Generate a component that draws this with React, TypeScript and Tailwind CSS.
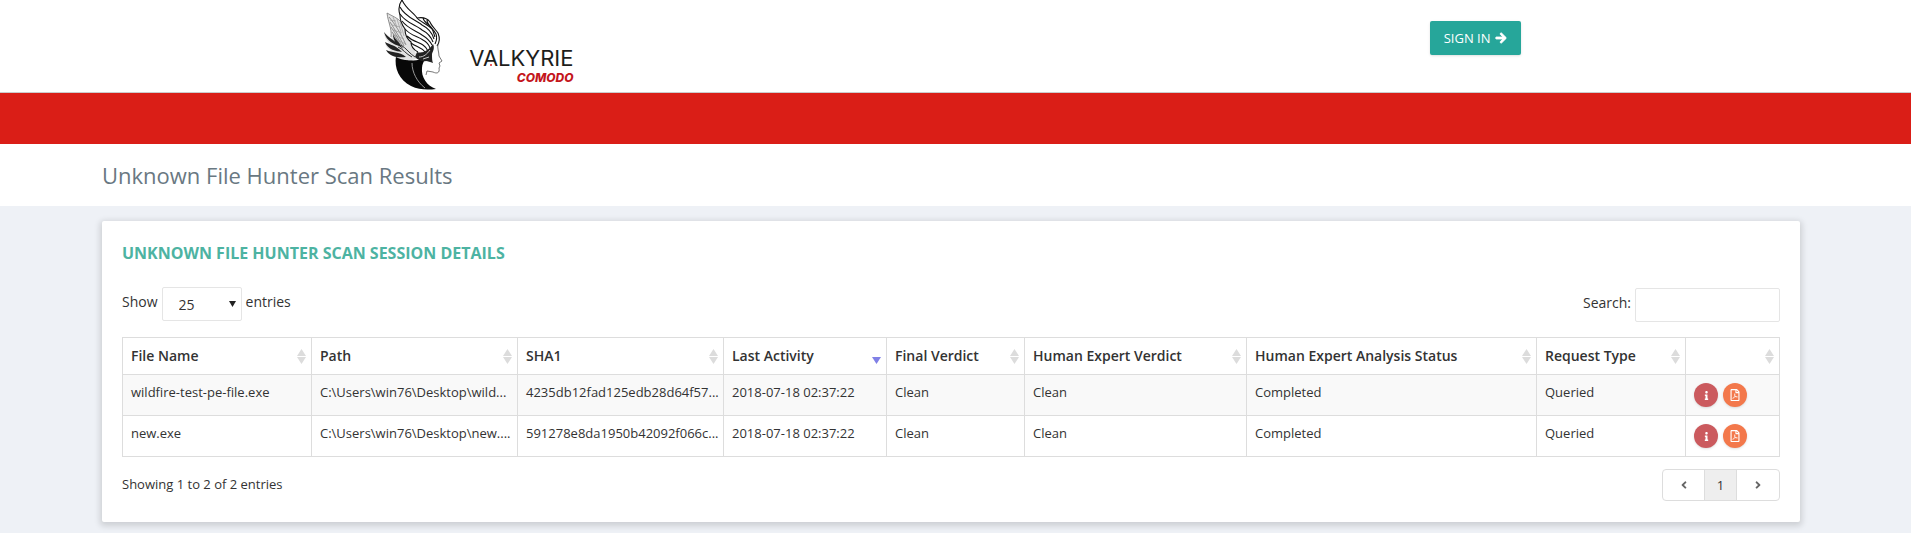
import React, { useState } from 'react';
import { FaArrowRight, FaAngleLeft, FaAngleRight, FaInfo, FaRegFilePdf } from 'react-icons/fa';

interface ScanRow {
  fileName: string;
  path: string;
  sha1: string;
  lastActivity: string;
  finalVerdict: string;
  expertVerdict: string;
  analysisStatus: string;
  requestType: string;
}

const columns = [
  { title: 'File Name', width: 'w-[189px]' },
  { title: 'Path', width: 'w-[206px]' },
  { title: 'SHA1', width: 'w-[206px]' },
  { title: 'Last Activity', width: 'w-[163px]', sorted: true },
  { title: 'Final Verdict', width: 'w-[138px]' },
  { title: 'Human Expert Verdict', width: 'w-[222px]' },
  { title: 'Human Expert Analysis Status', width: 'w-[290px]' },
  { title: 'Request Type', width: 'w-[149px]' },
  { title: '', width: 'w-[94px]' },
];

const rows: ScanRow[] = [
  {
    fileName: 'wildfire-test-pe-file.exe',
    path: 'C:\\Users\\win76\\Desktop\\wild...',
    sha1: '4235db12fad125edb28d64f57...',
    lastActivity: '2018-07-18 02:37:22',
    finalVerdict: 'Clean',
    expertVerdict: 'Clean',
    analysisStatus: 'Completed',
    requestType: 'Queried',
  },
  {
    fileName: 'new.exe',
    path: 'C:\\Users\\win76\\Desktop\\new....',
    sha1: '591278e8da1950b42092f066c...',
    lastActivity: '2018-07-18 02:37:22',
    finalVerdict: 'Clean',
    expertVerdict: 'Clean',
    analysisStatus: 'Completed',
    requestType: 'Queried',
  },
];

const Helmet = () => (
  <svg width="60" height="90" viewBox="0 0 60 90" fill="none" aria-hidden="true">
    {/* hair */}
    <path d="M12 56 C10 68 15 80 27 86 C35 90 44 90 52 89 C43 86 37 77 38 68 C38 64 40 62 41 58 C32 62 22 61 12 56 Z" fill="#080808" />
    <path d="M28 63 C28 72 33 82 41 88" stroke="#bbb" strokeWidth="0.8" />
    {/* back wing */}
    <path d="M3 13 C8 16 14 18 17 22 L34 58 C27 62 17 60 12 57 C8 56 4 54 2 50 L7 51 C4 48 1 46 1 42 L6 44 C3 41 0 37 0 32 L7 38 C8 33 6 28 5 24 C4 20 3 17 3 13 Z" fill="#e2e2e2" />
    <path d="M3 13 C8 16 14 18 17 22 M3 13 C4 22 8 28 7 37 M5 17 C11 24 16 32 22 45 M6 22 C11 30 15 36 20 46 M7 27 C12 34 15 40 19 48 M8 32 C12 37 15 43 19 50" stroke="#777" strokeWidth="0.8" />
    <path d="M9 17 L13 27 M13 19 L17 32 M16 22 L20 36 M6 20 L12 21 M8 25 L16 27 M9 30 L18 33 M10 35 L20 39 M11 39 L22 44" stroke="#999" strokeWidth="0.7" />
    <path d="M0 32 C4 38 10 39 15 46 C10 44 3 42 0 32 Z M1 42 C6 45 12 45 18 52 C12 51 4 50 1 42 Z M2 50 C8 53 15 51 22 57 C14 58 6 57 2 50 Z M9 34 C11 40 16 42 18 48 C13 45 9 41 9 34 Z" fill="#222" />
    <path d="M14 47 C19 49 22 54 28 57 M17 45 C22 48 26 54 31 57" stroke="#333" strokeWidth="1" />
    {/* front wing */}
    <path d="M18 0 C15 4 14 9 16 15 C16 20 18 25 21 29 C21 34 23 39 27 42 C27 46 30 50 34 52 C35 56 40 58 44 57 C48 55 50 51 52 48 C54 46 56 42 55 38 C54 33 51 29 48 25 C45 20 40 20 35 18 C30 14 22 9 18 0 Z" fill="#fff" />
    <path d="M18 0 C15 4 14 9 16 15 C16 20 18 25 21 29 C21 34 23 39 27 42 C27 46 30 50 34 52" stroke="#111" strokeWidth="1.1" />
    <path d="M18 0 C22 9 30 13 33 18 C36 22 44 24 48 29 C50 32 50 35 51 37 M16 7 C21 17 32 20 38 25 C44 28 48 32 50 39 M16 14 C22 23 32 25 38 30 C44 33 47 37 49 42 M18 21 C24 29 33 31 38 35 C43 38 46 41 48 45 M21 29 C27 36 34 36 39 40 C43 42 45 45 46 48 M23 36 C29 42 35 42 39 45 C42 47 43 49 44 51 M27 43 C32 47 37 47 41 52" stroke="#111" strokeWidth="1.1" />
    <path d="M33 18 C38 17 43 18 46 22 C47 25 51 29 54 33 C56 38 56 42 53 46 M43 20 C43 25 49 28 52 34 C53 37 53 40 51 44 M39 18 C40 22 44 24 47 27" stroke="#111" strokeWidth="1.1" />
    {/* temple */}
    <path d="M33 52 C39 54 45 50 49 44 C51 48 49 51 48 54 C48 58 48 61 49 63 C46 62 44 61 42 61 C38 62 34 60 31 57 Z" fill="#222" />
    <path d="M35 57 C40 57 43 54 46 50 M39 59 L45 57" stroke="#eee" strokeWidth="0.8" />
    {/* profile */}
    <path d="M54 44 C53 48 55 52 55 56 L58 61 L55 63 L56 66 L55 68 C56 73 53 74 49 72 L43 71 L42 75" stroke="#555" strokeWidth="0.8" />
  </svg>
);

const SortIcon = ({ sorted }: { sorted?: boolean }) => (
  <svg width="9" height="15" viewBox="0 0 9 15" className="shrink-0" aria-hidden="true">
    {!sorted && <path d="M4.5 0 L9 7 H0 Z" fill="#dcdcdc" />}
    <path d="M0 8 H9 L4.5 15 Z" fill={sorted ? '#8080e6' : '#dcdcdc'} />
  </svg>
);

const App: React.FC = () => {
  const [pageSize, setPageSize] = useState('25');
  const [search, setSearch] = useState('');

  const visible = rows.filter((r) => r.fileName.includes(search) || r.sha1.includes(search));

  return (
    <div className="min-h-screen bg-[#eef1f6] text-sm text-[#333] font-['Open_Sans',sans-serif]">
      {/* Header */}
      <header className="bg-white border-b border-[#ccc]">
        <div className="max-w-[1144px] h-[92px] mx-auto flex items-start justify-between">
          <a href="#" className="w-[190px] flex items-start justify-between">
            <Helmet />
            <span className="pt-[46px] flex flex-col items-end font-['Inter',sans-serif]">
              <span className="relative text-[22px] leading-6 text-[#1d1d1b]">
                VALKYRIE
                <span className="absolute left-[21px] bottom-1 size-[2px] rounded-full bg-[#d8232a]" />
              </span>
              <span className="mt-[2px] text-xs leading-3 font-extrabold italic text-[#c4161c]">COMODO</span>
            </span>
          </a>
          <button className="mt-[21px] mr-[7px] h-[34px] px-[14px] flex items-center gap-1 rounded-xs bg-[#26a69a] text-white text-[13px] shadow">
            SIGN IN <FaArrowRight size={12} stroke="currentColor" strokeWidth={40} />
          </button>
        </div>
      </header>
      <div className="h-[51px] bg-[#da1e17]" />

      {/* Page title */}
      <div className="bg-white pl-[102px] py-4">
        <h1 className="text-[22px] leading-[30px] text-[#697882]">Unknown File Hunter Scan Results</h1>
      </div>

      <main className="pl-[102px] pr-[111px] pt-[15px] pb-[11px]">
        <section className="bg-white rounded-xs shadow-[0_2px_6px_2px_rgba(0,0,0,0.14)] px-5 pt-5 pb-[21px]">
          <h2 className="text-base leading-6 font-bold text-[#4db3a2]">UNKNOWN FILE HUNTER SCAN SESSION DETAILS</h2>

          <div className="mt-[22px] flex justify-between leading-[30px]">
            <label className="flex items-start gap-1">
              Show
              <span className="relative">
                <select
                  value={pageSize}
                  onChange={(e) => setPageSize(e.target.value)}
                  className="block w-20 h-[34px] pl-4 pt-[2px] appearance-none bg-white border border-[#e5e5e5] rounded-xs"
                >
                  <option>10</option>
                  <option>25</option>
                  <option>50</option>
                </select>
                <svg width="7" height="6" viewBox="0 0 7 6" className="absolute right-[6px] top-[14px] pointer-events-none">
                  <path d="M0 0 H7 L3.5 6 Z" fill="#222" />
                </svg>
              </span>
              entries
            </label>
            <label className="pt-px flex items-start gap-1">
              Search:
              <input
                type="search"
                value={search}
                onChange={(e) => setSearch(e.target.value)}
                className="w-[145px] h-[34px] px-3 border border-[#e5e5e5] rounded-xs"
              />
            </label>
          </div>

          <table className="mt-[15px] w-full table-fixed border-collapse">
            <thead>
              <tr>
                {columns.map((col, i) => (
                  <th key={i} className={`${col.width} h-[37px] pl-2 pr-[5px] border border-[#ddd] text-left font-semibold`}>
                    <div className="flex items-center justify-between">
                      <span className="whitespace-nowrap">{col.title}</span>
                      <SortIcon sorted={col.sorted} />
                    </div>
                  </th>
                ))}
              </tr>
            </thead>
            <tbody className="text-[13px] leading-[18px]">
              {visible.map((row) => (
                <tr key={row.sha1} className="odd:bg-[#f9f9f9]">
                  {Object.values(row).map((value, i) => (
                    <td key={i} className="px-2 pt-2 border border-[#ddd] align-top whitespace-nowrap">{value}</td>
                  ))}
                  <td className="p-2 border border-[#ddd]">
                    <div className="flex gap-[5px] text-white">
                      <button aria-label="Details" className="w-6 h-6 rounded-full bg-[#cb5a5e] flex items-center justify-center shadow">
                        <FaInfo size={9} />
                      </button>
                      <button aria-label="PDF report" className="w-6 h-6 rounded-full bg-[#f3784b] flex items-center justify-center shadow">
                        <FaRegFilePdf size={12} />
                      </button>
                    </div>
                  </td>
                </tr>
              ))}
            </tbody>
          </table>

          <div className="mt-3 flex items-start justify-between text-[13px]">
            <span className="leading-[30px]">Showing 1 to 2 of 2 entries</span>
            <nav className="h-8 flex border border-[#ddd] rounded text-[#666]">
              <button aria-label="Previous" className="w-[41px] flex items-center justify-center"><FaAngleLeft size={12} /></button>
              <button className="w-[33px] bg-[#eee] border-x border-[#ddd] text-[#333]">1</button>
              <button aria-label="Next" className="w-[42px] flex items-center justify-center"><FaAngleRight size={12} /></button>
            </nav>
          </div>
        </section>
      </main>
    </div>
  );
};

export default App;
